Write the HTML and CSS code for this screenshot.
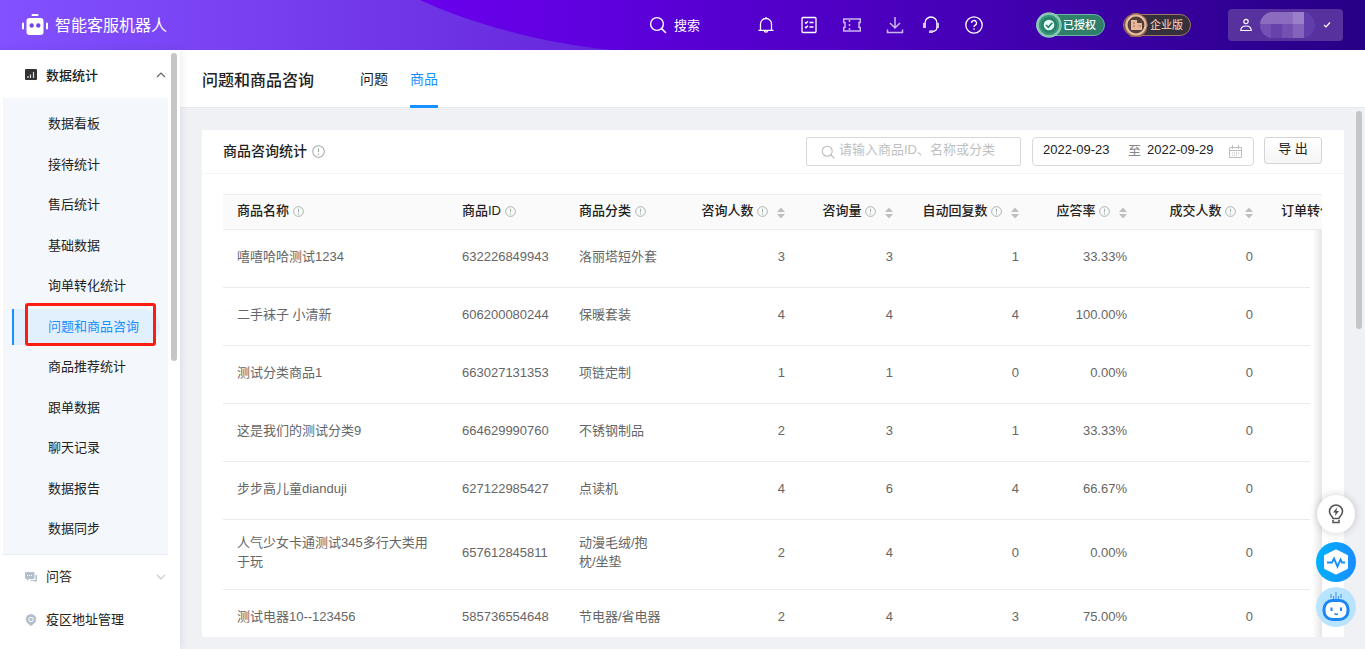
FILE: index.html
```html
<!DOCTYPE html>
<html lang="zh-CN">
<head>
<meta charset="utf-8">
<title>智能客服机器人</title>
<link rel="stylesheet" href="styles.css">
</head>
<body>
<svg class="defs" aria-hidden="true">
  <symbol id="info" viewBox="0 0 12 12"><circle cx="6" cy="6" r="5.3" fill="none" stroke="#a3afab"/><path d="M6 3v3.8M6 8v1.2" stroke="#a3afab" stroke-width="1.1"/></symbol>
  <symbol id="sort" viewBox="0 0 8 12"><path d="M0 5l4-4.5L8 5zM0 7l4 4.5L8 7z" fill="#bfbfbf"/></symbol>
  <symbol id="search" viewBox="0 0 18 18"><circle cx="8" cy="8" r="6.4" fill="none" stroke="currentColor" stroke-width="1.4"/><path d="M12.6 12.6L17 17" stroke="currentColor" stroke-width="1.5"/></symbol>
</svg>

<header class="topbar">
  <svg class="swoosh" viewBox="0 0 620 50" aria-hidden="true">
    <defs><linearGradient id="sw"><stop offset="0" stop-color="#8351ff"/><stop offset="1" stop-color="#6527da"/></linearGradient></defs>
    <path d="M0 0H420C470 23 540 43 612 50H0z" fill="url(#sw)"/>
  </svg>
  <a class="brand" href="#">
    <svg width="26" height="22" viewBox="0 0 26 22" aria-hidden="true"><g fill="#fff"><rect x="9.500" y="0" width="7" height="2" rx="1"/><rect x="4.500" y="4" width="17" height="17" rx="3"/><rect x="0" y="8.500" width="2" height="7" rx="1"/><rect x="24" y="8.500" width="2" height="7" rx="1"/></g><g fill="#7443ee"><circle cx="9.700" cy="11.500" r="2.200"/><circle cx="16.300" cy="11.500" r="2.200"/></g></svg>
    <span>智能客服机器人</span>
  </a>
  <button class="top-search"><svg width="18" height="18" aria-hidden="true"><use href="#search"/></svg>搜索</button>
  <nav class="top-icons" aria-label="工具">
    <button aria-label="通知"><svg viewBox="0 0 18 18"><path d="M3.500 14V8a5.500 5.500 0 0 1 11 0v6M1.500 14.300h15M9 1v1.500M7.300 14.500a1.700 1.700 0 0 0 3.400 0"/></svg></button>
    <button aria-label="任务"><svg viewBox="0 0 18 18"><rect x="2" y="1.500" width="14" height="15" rx="1"/><path d="M5 6.300l1 1 2-2M9.500 6.500h4M9.500 11h4M5 10.800l1 1 2-2"/></svg></button>
    <button aria-label="卡券"><svg class="soft" viewBox="0 0 18 18"><path d="M.7 3h16.600v3.500h-1.300v5h1.300V15H.7v-3.500H2v-5H.7zM6.500 4v2M6.500 8v2M6.500 12v2"/></svg></button>
    <button aria-label="下载"><svg class="soft" viewBox="0 0 18 18"><path d="M9 1v11M4 7l5 5 5-5M1.500 13.500v3h15v-3"/></svg></button>
  </nav>
  <nav class="top-icons second" aria-label="帮助">
    <button aria-label="客服"><svg viewBox="0 0 18 18"><path d="M3 7a6 6 0 0 1 12 0v4c0 3-2 4.500-5 4.500H8"/><path class="fill" d="M1 7h3v5H1zM14 7h3v5h-3zM7 14.500h4V17H7z"/></svg></button>
    <button aria-label="帮助中心"><svg viewBox="0 0 18 18"><circle cx="9" cy="9" r="8.200"/><path d="M6.500 7a2.500 2.500 0 1 1 3.500 2.300c-.8.400-1 .8-1 1.700M9 12.300v1.500"/></svg></button>
  </nav>
  <div class="badges">
    <span class="badge green"><svg class="seal" viewBox="0 0 26 26" aria-hidden="true"><circle cx="13" cy="13" r="11.500" fill="#3a967b" stroke="#8cc9b3" stroke-width="2.500"/><circle cx="13" cy="13" r="8" fill="#278068"/><circle cx="13" cy="13" r="5.300" fill="#e6fbf5"/><path d="M10 13l2.300 2.300 4-4.500" fill="none" stroke="#278068" stroke-width="1.700"/></svg>已授权</span>
    <span class="badge dark"><svg class="seal" viewBox="0 0 26 26" aria-hidden="true"><path d="M10 1h6l7 5 2 7-2 7-5 5H8l-5-5-2-7 2-7z" fill="#92694f"/><circle cx="13" cy="13" r="9.500" fill="#554039" stroke="#e9bea3" stroke-width="2.200"/><path d="M8 8h6v3h5v7H8z" fill="#e8b79c"/><path d="M10 11h2M10 14h2M15.500 14h2" stroke="#9a6a54"/></svg>企业版</span>
  </div>
  <button class="user" aria-label="用户菜单">
    <svg width="12" height="14" viewBox="0 0 12 14" aria-hidden="true"><circle cx="6" cy="3.500" r="2.200"/><path d="M.8 12.500c0-3 1.800-4.500 5.200-4.500s5.200 1.500 5.200 4.500z"/></svg>
    <span class="mask"><i></i><i></i><i></i><i></i><i></i></span>
    <svg width="8" height="8" viewBox="0 0 8 8" aria-hidden="true"><path d="M1 4l2 2 4-4.500"/></svg>
  </button>
</header>

<div class="shell">
  <aside class="sidebar">
    <button class="group open">
      <svg width="12" height="12" viewBox="0 0 12 12" aria-hidden="true"><rect width="12" height="11" rx="1" fill="#333"/><path d="M3 9V7M5.500 9V5.500M8.500 9V3" stroke="#ddd" stroke-width="1.200"/></svg>
      <span>数据统计</span>
      <svg class="chev" width="10" height="8" viewBox="0 0 10 8" aria-hidden="true"><path d="M1 6l4-4 4 4" fill="none" stroke="#666" stroke-width="1.200"/></svg>
    </button>
    <nav class="submenu">
      <a href="#">数据看板</a>
      <a href="#">接待统计</a>
      <a href="#">售后统计</a>
      <a href="#">基础数据</a>
      <a href="#">询单转化统计</a>
      <a href="#" class="active" aria-current="page">问题和商品咨询</a>
      <a href="#">商品推荐统计</a>
      <a href="#">跟单数据</a>
      <a href="#">聊天记录</a>
      <a href="#">数据报告</a>
      <a href="#">数据同步</a>
    </nav>
    <button class="group">
      <svg width="12" height="12" viewBox="0 0 12 12" aria-hidden="true"><path d="M1 1h7.500a1 1 0 0 1 1 1v5a1 1 0 0 1-1 1H4l-2 2V8H1a1 1 0 0 1-1-1V2a1 1 0 0 1 1-1z" fill="#b4bfcd"/><path d="M10.500 4h1.500v6h-1v1.800L9.200 10H5.500V9h5z" fill="#b4bfcd"/><path d="M2 4.500h5.500" stroke="#fff" stroke-dasharray="1 1"/></svg>
      <span>问答</span>
      <svg class="chev" width="10" height="8" viewBox="0 0 10 8" aria-hidden="true"><path d="M1 2l4 4 4-4" fill="none" stroke="#ccc" stroke-width="1.200"/></svg>
    </button>
    <button class="group">
      <svg width="12" height="12" viewBox="0 0 12 12" aria-hidden="true"><path d="M6 0a5.200 5.200 0 0 1 5.200 5.200C11.200 8.500 8 10.500 6 12 4 10.500.8 8.500.8 5.200A5.200 5.200 0 0 1 6 0z" fill="#b4bfcd"/><circle cx="6" cy="5.500" r="2.200" fill="none" stroke="#fff"/></svg>
      <span>疫区地址管理</span>
    </button>
    <div class="side-scroll"></div>
  </aside>

  <main class="main">
    <div class="page-head">
      <h1>问题和商品咨询</h1>
      <nav class="tabs"><a href="#">问题</a><a href="#" class="on">商品</a></nav>
    </div>
    <section class="card">
      <div class="card-head">
        <h2>商品咨询统计 <svg width="13" height="13" aria-hidden="true"><use href="#info"/></svg></h2>
        <label class="field find"><svg width="14" height="14" aria-hidden="true"><use href="#search"/></svg><input type="text" aria-label="搜索商品" placeholder="请输入商品ID、名称或分类"></label>
        <div class="field range">
          <input type="text" aria-label="开始日期" value="2022-09-23"><span>至</span><input type="text" aria-label="结束日期" value="2022-09-29">
          <svg width="13" height="13" viewBox="0 0 13 13" aria-hidden="true"><path d="M.5 2.500h12v10H.5zM.5 5.500h12M3.500 0v4M9.500 0v4" fill="none" stroke="#bfbfbf"/><path d="M3 8h7M3 10.200h5" stroke="#bfbfbf" stroke-dasharray="1 1"/></svg>
        </div>
        <button class="export">导 出</button>
      </div>
      <div class="table-wrap">
        <table>
          <colgroup><col class="c-name"><col class="c-id"><col class="c-cat"><col class="c-a"><col class="c-b"><col class="c-c"><col class="c-b"><col class="c-c"><col class="c-last"></colgroup>
          <thead>
            <tr>
              <th>商品名称 <svg class="i"><use href="#info"/></svg></th>
              <th>商品ID <svg class="i"><use href="#info"/></svg></th>
              <th>商品分类 <svg class="i"><use href="#info"/></svg></th>
              <th class="n">咨询人数 <svg class="i"><use href="#info"/></svg><svg class="s"><use href="#sort"/></svg></th>
              <th class="n">咨询量 <svg class="i"><use href="#info"/></svg><svg class="s"><use href="#sort"/></svg></th>
              <th class="n">自动回复数 <svg class="i"><use href="#info"/></svg><svg class="s"><use href="#sort"/></svg></th>
              <th class="n">应答率 <svg class="i"><use href="#info"/></svg><svg class="s"><use href="#sort"/></svg></th>
              <th class="n">成交人数 <svg class="i"><use href="#info"/></svg><svg class="s"><use href="#sort"/></svg></th>
              <th>订单转化率</th>
            </tr>
          </thead>
          <tbody>
            <tr><td>嘻嘻哈哈测试1234</td><td>632226849943</td><td>洛丽塔短外套</td><td class="n">3</td><td class="n">3</td><td class="n">1</td><td class="n">33.33%</td><td class="n">0</td><td></td></tr>
            <tr><td>二手袜子 小清新</td><td>606200080244</td><td>保暖套装</td><td class="n">4</td><td class="n">4</td><td class="n">4</td><td class="n">100.00%</td><td class="n">0</td><td></td></tr>
            <tr><td>测试分类商品1</td><td>663027131353</td><td>项链定制</td><td class="n">1</td><td class="n">1</td><td class="n">0</td><td class="n">0.00%</td><td class="n">0</td><td></td></tr>
            <tr><td>这是我们的测试分类9</td><td>664629990760</td><td>不锈钢制品</td><td class="n">2</td><td class="n">3</td><td class="n">1</td><td class="n">33.33%</td><td class="n">0</td><td></td></tr>
            <tr><td>步步高儿童dianduji</td><td>627122985427</td><td>点读机</td><td class="n">4</td><td class="n">6</td><td class="n">4</td><td class="n">66.67%</td><td class="n">0</td><td></td></tr>
            <tr><td>人气少女卡通测试345多行大类用于玩</td><td>657612845811</td><td>动漫毛绒/抱枕/坐垫</td><td class="n">2</td><td class="n">4</td><td class="n">0</td><td class="n">0.00%</td><td class="n">0</td><td></td></tr>
            <tr><td>测试电器10--123456</td><td>585736554648</td><td>节电器/省电器</td><td class="n">2</td><td class="n">4</td><td class="n">3</td><td class="n">75.00%</td><td class="n">0</td><td></td></tr>
          </tbody>
        </table>
        <div class="edge"></div>
      </div>
    </section>
    <div class="main-scroll"></div>
  </main>
</div>

<div class="floaters">
  <button class="tip" aria-label="建议"><svg width="16" height="20" viewBox="0 0 16 20"><path d="M5 14.500c0-2-3.500-3-3.500-7a6.500 6.500 0 0 1 13 0c0 4-3.500 5-3.500 7zM5 16v2.500h6V16" fill="none" stroke="#555" stroke-width="1.600"/><path d="M9 3.500L5 8.500h2.500L7 12l4-5H8.500z" fill="#555"/></svg></button>
  <button class="pulse" aria-label="诊断"><svg width="26" height="28" viewBox="0 0 26 28"><path d="M13 2.500L24 8v12L13 25.500 2 20V8z" fill="#fff" stroke="#fff" stroke-width="2" stroke-linejoin="round"/><path d="M4 14.500h5l2-4 3.500 8 3-7 1.500 3H22" fill="none" stroke="#1a90ff" stroke-width="1.900"/></svg></button>
  <button class="bot" aria-label="机器人"><svg width="30" height="32" viewBox="0 0 30 32"><path d="M10 3v4M12.500 5v4M15 1v8M17.500 5v4M20 3v4" stroke="#4a9ff5" stroke-width="1.200"/><rect x="3" y="9.500" width="24" height="19" rx="8.500" fill="#fff" stroke="#1d86f5" stroke-width="3"/><path d="M10.500 16.500v3.500M20 16.500v3.500" stroke="#1d86f5" stroke-width="2"/><path d="M13.500 22.500q1.700 2 3.300 0" fill="none" stroke="#1d86f5" stroke-width="1.300"/></svg></button>
</div>
</body>
</html>
```
FILE: styles.css
```css
* { box-sizing: border-box; }
body {
  margin: 0;
  height: 100vh;
  display: flex;
  flex-direction: column;
  overflow: hidden;
  font: 13px/19px "Liberation Sans", "Noto Sans CJK SC", sans-serif;
  color: #222;
  background: #f0f1f5;
}
button, input { font: inherit; color: inherit; border: 0; background: none; padding: 0; margin: 0; }
a { color: inherit; text-decoration: none; }
svg { display: block; flex: none; }
.defs { position: absolute; width: 0; height: 0; }

/* Top bar */
.topbar {
  position: relative;
  flex: none;
  height: 50px;
  display: flex;
  align-items: center;
  padding: 0 22px;
  color: #fff;
  background: linear-gradient(90deg, #6a00ee 30%, #5b00d8 48%, #4200b0 74%, #260085);
}
.topbar > * { position: relative; flex: none; }
.topbar > .swoosh { position: absolute; left: 0; top: 0; width: 620px; height: 50px; }
.brand { display: flex; align-items: center; gap: 7px; font-size: 16px; margin-right: auto; }
.top-search { display: flex; align-items: center; gap: 7px; margin-right: 57px; }
.top-icons { display: flex; gap: 25px; margin-right: 18px; }
.top-icons.second { margin-right: 53px; }
.top-icons svg { width: 18px; height: 18px; fill: none; stroke: #fff; stroke-width: 1.3; }
.top-icons .soft { stroke: #cbb8ee; stroke-width: 1.5; }
.top-icons .fill { fill: #d8c8f4; stroke: none; }
.badges { display: flex; gap: 18px; margin-right: 37px; }
.badge {
  position: relative;
  width: 68px;
  height: 22px;
  padding-left: 26px;
  border: 1px solid;
  border-radius: 11px;
  font-size: 11px;
  line-height: 20px;
  font-weight: 500;
}
.badge.green { width: 69px; background: #2f7f6a; border-color: #69b59d; }
.badge.dark { background: #35313c; border-color: #a27560; color: #e9bea3; }
.seal { position: absolute; left: -1px; top: -3px; width: 26px; height: 26px; }
.user {
  width: 115px;
  height: 32px;
  padding: 0 12px;
  display: flex;
  align-items: center;
  gap: 8px;
  border-radius: 4px;
  background: #57329f;
}
.user svg { fill: none; stroke: #fff; stroke-width: 1.2; }
.mask { flex: 1; height: 26px; display: flex; border-radius: 13px; overflow: hidden; background: #5c38a8; }
.mask i { width: 12px; background: linear-gradient(#8b6cbf 46%, #7350b1 46%); }
.mask i:nth-child(2) { background: linear-gradient(#8a6bbf 46%, #6642aa 46%); }
.mask i:nth-child(4) { background: linear-gradient(#9a7fc9 46%, #8464bb 46%); }
.mask i:nth-child(5) { background: #603dab; }

/* Sidebar */
.shell { flex: 1; min-height: 0; display: flex; }
.sidebar {
  position: relative;
  z-index: 1;
  flex: none;
  width: 180px;
  padding-left: 3px;
  background: #fff;
  box-shadow: 1px 0 8px rgba(30, 40, 70, .1);
  overflow: hidden;
}
.group { width: 165px; height: 43px; padding: 0 2px 0 22px; display: flex; align-items: center; gap: 9px; }
.group.open { height: 48px; padding-top: 2px; font-weight: 500; }
.group .chev { margin-left: auto; }
.submenu {
  width: 165px;
  min-height: 457px;
  display: flex;
  flex-direction: column;
  justify-content: space-between;
  padding: 8px 8px 7px 9px;
  background: #f4f8fc;
  border-bottom: 1px solid #e8edf5;
}
.submenu a { height: 36px; line-height: 36px; padding-left: 34px; border-left: 2px solid transparent; }
.submenu .active { position: relative; color: #1890ff; border-color: #1890ff; border-radius: 0 18px 18px 0; background: #e2effd; }
.submenu .active::after {
  content: "";
  position: absolute;
  left: 11px;
  right: 4px;
  top: -6px;
  bottom: -1px;
  border: 3px solid #fb1d12;
  border-radius: 3px;
}
.side-scroll, .main-scroll { position: absolute; width: 6px; border-radius: 3px; background: #c6c6c6; }
.side-scroll { right: 3px; top: 3px; height: 308px; }
.main-scroll { right: 3px; top: 61px; height: 218px; }

/* Page */
.main { position: relative; flex: 1; min-width: 0; display: flex; flex-direction: column; }
.page-head {
  flex: none;
  height: 58px;
  display: flex;
  padding-left: 22px;
  gap: 46px;
  background: #fff;
  border-bottom: 1px solid #e8e9ed;
}
h1 { margin: 0; font-size: 16px; line-height: 61px; font-weight: 500; }
.tabs { display: flex; gap: 22px; font-size: 14px; line-height: 58px; }
.tabs a { height: 58px; }
.tabs .on { color: #1890ff; border-bottom: 3px solid #1890ff; }
.card { flex: 1; min-height: 0; margin: 22px 21px 12px 22px; background: #fff; display: flex; flex-direction: column; overflow: hidden; }
.card-head { flex: none; height: 44px; padding: 7px 22px 0 21px; display: flex; align-items: flex-start; border-bottom: 1px solid #f5f5f5; }
h2 { display: flex; align-items: center; gap: 5px; margin: 0 auto 0 0; font-size: 14px; line-height: 29px; font-weight: 500; }
.field { height: 29px; display: flex; align-items: center; border: 1px solid #d9d9d9; border-radius: 2px; }
.field input { padding-bottom: 4px; outline: 0; min-width: 0; }
.find { width: 215px; padding: 0 14px; gap: 4px; color: #bbb; }
.find input { flex: 1; }
.find input::placeholder { color: #bfbfbf; }
.range { width: 222px; margin: 0 10px 0 11px; padding: 0 11px 0 10px; border-radius: 4px; }
.range input { width: 72px; }
.range span { color: #888; margin: 0 6px 3px 13px; }
.range svg { margin-left: auto; }
.export { width: 58px; height: 27px; padding-bottom: 4px; border: 1px solid #d5d5d5; border-radius: 3px; background: linear-gradient(#fff, #f5f5f5); }

/* Table */
.table-wrap { position: relative; flex: 1; min-height: 0; margin: 20px 22px 0 21px; overflow: hidden; }
table { width: 1190px; table-layout: fixed; border-collapse: separate; border-spacing: 0; }
.c-name { width: 225px; }
.c-id { width: 117px; }
.c-cat { width: 110px; }
.c-a { width: 124px; }
.c-b { width: 108px; }
.c-c { width: 126px; }
.c-last { width: 146px; }
th { height: 36px; padding: 0 14px 4px; text-align: left; font-weight: 500; white-space: nowrap; background: #fafafa; border: 1px solid #ececec; border-width: 1px 0; }
th svg { display: inline-block; vertical-align: -2px; }
.i { width: 11px; height: 11px; }
.s { width: 8px; height: 12px; margin-left: 9px; vertical-align: -4px; }
td { height: 58px; padding: 13px 14px 18px; color: #666; border-bottom: 1px solid #ebebeb; }
.n { text-align: right; }
.edge { position: absolute; right: 0; top: 36px; bottom: 0; width: 12px; background: linear-gradient(90deg, #fff 20%, #e6e6e6); }

/* Floating tools */
.floaters { position: fixed; right: 9px; bottom: 22px; display: flex; flex-direction: column; align-items: center; gap: 5px; }
.floaters button { width: 40px; height: 40px; border-radius: 50%; display: flex; align-items: center; justify-content: center; }
.floaters .tip { margin-bottom: 4px; background: #fff; box-shadow: 0 0 8px rgba(0, 0, 0, .2); width: 38px; height: 38px; }
.floaters .pulse { background: linear-gradient(90deg, #00b2fa, #1a8cff); }
.floaters .bot { background: #b9e4ff; }
```
